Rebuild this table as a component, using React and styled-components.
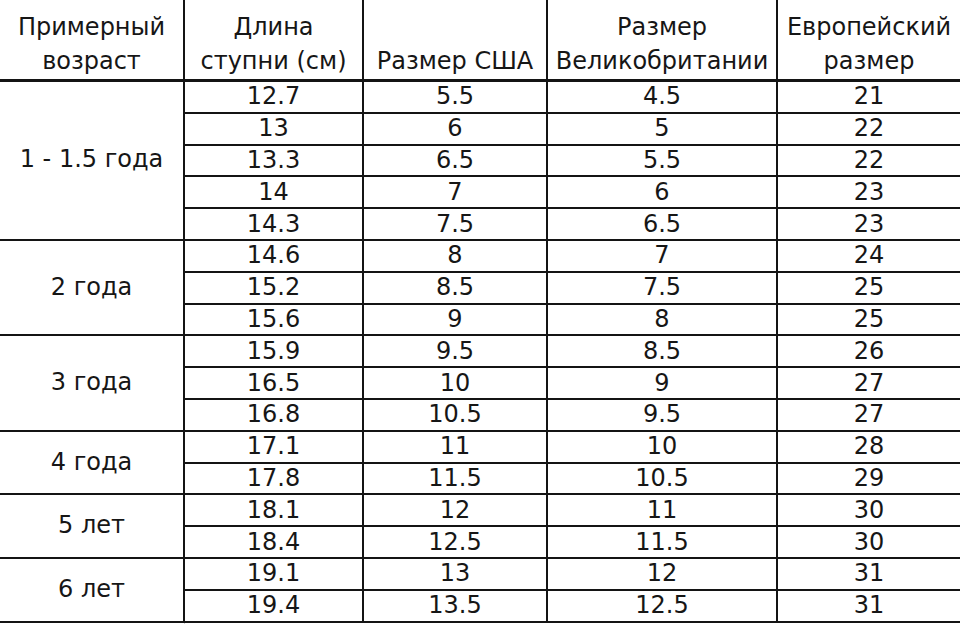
import React from "react";
import styled, { createGlobalStyle } from "styled-components";

const GlobalStyle = createGlobalStyle`
  html, body {
    margin: 0;
    padding: 0;
    background: #ffffff;
  }
  body {
    font-family: "DejaVu Sans", Verdana, sans-serif;
    color: #161616;
  }
`;

const Page = styled.div`
  width: 960px;
  height: 624px;
  overflow: hidden;
  background: #fff;
`;

const Table = styled.table`
  width: 960px;
  border-collapse: collapse;
  table-layout: fixed;
  font-size: 24px;
`;

const Head = styled.th`
  font-weight: normal;
  height: 78px;
  padding: 0 0 1px;
  line-height: 34px;
  vertical-align: bottom;
  text-align: center;
  border-left: 2px solid #141414;
  border-bottom: 3px solid #141414;
  white-space: nowrap;
  &:first-child {
    border-left: none;
  }
`;

const Cell = styled.td`
  height: 29.8px;
  padding: 0;
  line-height: 29px;
  text-align: center;
  vertical-align: middle;
  border-left: 2px solid #141414;
  border-bottom: 2px solid #141414;
  white-space: nowrap;
`;

const AgeCell = styled.td`
  padding: 0 0 2px;
  text-align: center;
  vertical-align: middle;
  border-bottom: 2px solid #141414;
  white-space: nowrap;
`;

const Tail = styled.div`
  margin-left: 184px;
  width: 1px;
  height: 10px;
  background: #d0d0d0;
`;

const groups = [
  {
    age: "1 - 1.5 года",
    rows: [
      ["12.7", "5.5", "4.5", "21"],
      ["13", "6", "5", "22"],
      ["13.3", "6.5", "5.5", "22"],
      ["14", "7", "6", "23"],
      ["14.3", "7.5", "6.5", "23"],
    ],
  },
  {
    age: "2 года",
    rows: [
      ["14.6", "8", "7", "24"],
      ["15.2", "8.5", "7.5", "25"],
      ["15.6", "9", "8", "25"],
    ],
  },
  {
    age: "3 года",
    rows: [
      ["15.9", "9.5", "8.5", "26"],
      ["16.5", "10", "9", "27"],
      ["16.8", "10.5", "9.5", "27"],
    ],
  },
  {
    age: "4 года",
    rows: [
      ["17.1", "11", "10", "28"],
      ["17.8", "11.5", "10.5", "29"],
    ],
  },
  {
    age: "5 лет",
    rows: [
      ["18.1", "12", "11", "30"],
      ["18.4", "12.5", "11.5", "30"],
    ],
  },
  {
    age: "6 лет",
    rows: [
      ["19.1", "13", "12", "31"],
      ["19.4", "13.5", "12.5", "31"],
    ],
  },
];

export default function App() {
  return (
    <Page>
      <GlobalStyle />
      <Table>
        <colgroup>
          <col style={{ width: 184 }} />
          <col style={{ width: 179 }} />
          <col style={{ width: 184 }} />
          <col style={{ width: 230 }} />
          <col style={{ width: 183 }} />
        </colgroup>
        <thead>
          <tr>
            <Head>
              Примерный
              <br />
              возраст
            </Head>
            <Head>
              Длина
              <br />
              ступни (см)
            </Head>
            <Head>Размер США</Head>
            <Head>
              Размер
              <br />
              Великобритании
            </Head>
            <Head>
              Европейский
              <br />
              размер
            </Head>
          </tr>
        </thead>
        <tbody>
          {groups.map((g) =>
            g.rows.map((r, i) => (
              <tr key={g.age + i}>
                {i === 0 && <AgeCell rowSpan={g.rows.length}>{g.age}</AgeCell>}
                {r.map((v, j) => (
                  <Cell key={j}>{v}</Cell>
                ))}
              </tr>
            ))
          )}
        </tbody>
      </Table>
      <Tail />
    </Page>
  );
}
